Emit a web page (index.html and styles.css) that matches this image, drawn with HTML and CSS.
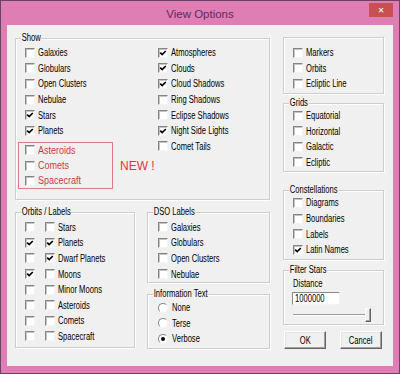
FILE: index.html
```html
<!DOCTYPE html>
<html lang="en">

<head>
    <meta charset="UTF-8">
    <meta name="viewport" content="width=device-width, initial-scale=1.0">
    <title>View Options</title>
    <link rel="stylesheet" href="styles.css">
</head>

<body>
    <div class="janela">
        <!-- Barra de título -->
        <div class="barra-titulo">
            <span></span>
            <span class="titulo">View Options</span>
            <span class="fechar">✕</span>
        </div>

        <div class="cliente">
            <!-- Coluna esquerda -->
            <div class="coluna-esq">
                <div class="grupo grupo-show">
                    <span class="rotulo">Show</span>
                    <div class="show-cols">
                        <div>
                            <div class="item"><span class="chk"></span><span class="t">Galaxies</span></div>
                            <div class="item"><span class="chk"></span><span class="t">Globulars</span></div>
                            <div class="item"><span class="chk"></span><span class="t">Open Clusters</span></div>
                            <div class="item"><span class="chk"></span><span class="t">Nebulae</span></div>
                            <div class="item"><span class="chk on"><svg viewBox="0 0 8 8"><polyline points="1.2,3.6 3.2,5.6 6.8,2"/></svg></span><span class="t">Stars</span></div>
                            <div class="item"><span class="chk on"><svg viewBox="0 0 8 8"><polyline points="1.2,3.6 3.2,5.6 6.8,2"/></svg></span><span class="t">Planets</span></div>
                            <div class="novo-linha">
                                <div class="caixa-vermelha">
                                    <div class="item"><span class="chk"></span><span class="t">Asteroids</span></div>
                                    <div class="item"><span class="chk"></span><span class="t">Comets</span></div>
                                    <div class="item"><span class="chk"></span><span class="t">Spacecraft</span></div>
                                </div>
                                <span class="novo">NEW !</span>
                            </div>
                        </div>
                        <div>
                            <div class="item"><span class="chk on"><svg viewBox="0 0 8 8"><polyline points="1.2,3.6 3.2,5.6 6.8,2"/></svg></span><span class="t">Atmospheres</span></div>
                            <div class="item"><span class="chk on"><svg viewBox="0 0 8 8"><polyline points="1.2,3.6 3.2,5.6 6.8,2"/></svg></span><span class="t">Clouds</span></div>
                            <div class="item"><span class="chk on"><svg viewBox="0 0 8 8"><polyline points="1.2,3.6 3.2,5.6 6.8,2"/></svg></span><span class="t">Cloud Shadows</span></div>
                            <div class="item"><span class="chk"></span><span class="t">Ring Shadows</span></div>
                            <div class="item"><span class="chk"></span><span class="t">Eclipse Shadows</span></div>
                            <div class="item"><span class="chk on"><svg viewBox="0 0 8 8"><polyline points="1.2,3.6 3.2,5.6 6.8,2"/></svg></span><span class="t">Night Side Lights</span></div>
                            <div class="item"><span class="chk"></span><span class="t">Comet Tails</span></div>
                        </div>
                    </div>
                </div>

                <div class="linha-baixo">
                    <div class="grupo grupo-orbits">
                        <span class="rotulo">Orbits / Labels</span>
                        <div class="item"><span class="chk"></span><span class="chk"></span><span class="t">Stars</span></div>
                        <div class="item"><span class="chk on"><svg viewBox="0 0 8 8"><polyline points="1.2,3.6 3.2,5.6 6.8,2"/></svg></span><span class="chk on"><svg viewBox="0 0 8 8"><polyline points="1.2,3.6 3.2,5.6 6.8,2"/></svg></span><span class="t">Planets</span></div>
                        <div class="item"><span class="chk"></span><span class="chk on"><svg viewBox="0 0 8 8"><polyline points="1.2,3.6 3.2,5.6 6.8,2"/></svg></span><span class="t">Dwarf Planets</span></div>
                        <div class="item"><span class="chk on"><svg viewBox="0 0 8 8"><polyline points="1.2,3.6 3.2,5.6 6.8,2"/></svg></span><span class="chk"></span><span class="t">Moons</span></div>
                        <div class="item"><span class="chk"></span><span class="chk"></span><span class="t">Minor Moons</span></div>
                        <div class="item"><span class="chk"></span><span class="chk"></span><span class="t">Asteroids</span></div>
                        <div class="item"><span class="chk"></span><span class="chk"></span><span class="t">Comets</span></div>
                        <div class="item"><span class="chk"></span><span class="chk"></span><span class="t">Spacecraft</span></div>
                    </div>

                    <div class="coluna-dso">
                        <div class="grupo grupo-dso">
                            <span class="rotulo">DSO Labels</span>
                            <div class="item"><span class="chk"></span><span class="t">Galaxies</span></div>
                            <div class="item"><span class="chk"></span><span class="t">Globulars</span></div>
                            <div class="item"><span class="chk"></span><span class="t">Open Clusters</span></div>
                            <div class="item"><span class="chk"></span><span class="t">Nebulae</span></div>
                        </div>
                        <div class="grupo grupo-info">
                            <span class="rotulo">Information Text</span>
                            <div class="item"><span class="radio"></span><span class="t">None</span></div>
                            <div class="item"><span class="radio"></span><span class="t">Terse</span></div>
                            <div class="item"><span class="radio on"></span><span class="t">Verbose</span></div>
                        </div>
                    </div>
                </div>
            </div>

            <!-- Coluna direita -->
            <div class="coluna-dir">
                <div class="grupo grupo-topo">
                    <div class="item"><span class="chk"></span><span class="t">Markers</span></div>
                    <div class="item"><span class="chk"></span><span class="t">Orbits</span></div>
                    <div class="item"><span class="chk"></span><span class="t">Ecliptic Line</span></div>
                </div>

                <div class="grupo grupo-grids">
                    <span class="rotulo">Grids</span>
                    <div class="item"><span class="chk"></span><span class="t">Equatorial</span></div>
                    <div class="item"><span class="chk"></span><span class="t">Horizontal</span></div>
                    <div class="item"><span class="chk"></span><span class="t">Galactic</span></div>
                    <div class="item"><span class="chk"></span><span class="t">Ecliptic</span></div>
                </div>

                <div class="grupo grupo-const">
                    <span class="rotulo">Constellations</span>
                    <div class="item"><span class="chk"></span><span class="t">Diagrams</span></div>
                    <div class="item"><span class="chk"></span><span class="t">Boundaries</span></div>
                    <div class="item"><span class="chk"></span><span class="t">Labels</span></div>
                    <div class="item"><span class="chk on"><svg viewBox="0 0 8 8"><polyline points="1.2,3.6 3.2,5.6 6.8,2"/></svg></span><span class="t">Latin Names</span></div>
                </div>

                <div class="grupo grupo-filtro">
                    <span class="rotulo">Filter Stars</span>
                    <div class="item"><span class="t">Distance</span></div>
                    <div class="campo"><span class="t">1000000</span></div>
                    <div class="slider">
                        <span class="trilho"></span>
                        <span class="cursor"></span>
                    </div>
                </div>

                <div class="botoes">
                    <button class="botao"><span class="t">OK</span></button>
                    <button class="botao"><span class="t">Cancel</span></button>
                </div>
            </div>
        </div>
    </div>
</body>

</html>
```

FILE: styles.css
```css
/* Configuração geral */
body {
    margin: 0;
    background: #ffffff;
    font-family: "Liberation Sans", Arial, sans-serif;
    font-size: 10px;
    color: #000;
}

/* Fonte estreita do diálogo */
.t {
    display: inline-block;
    transform: scaleX(0.76);
    transform-origin: left center;
}

.janela {
    width: 400px;
    height: 374px;
    box-sizing: border-box;
    border: 1px solid #6e4361;
    background: #df7db5;
    padding: 0 6px 7px;
    display: flex;
    flex-direction: column;
}

/* Barra de título */
.barra-titulo {
    height: 24px;
    flex: none;
    display: grid;
    grid-template-columns: 1fr auto 1fr;
    align-items: center;
}

.titulo {
    font-size: 11.5px;
    color: #652957;
    padding-top: 1px;
}

.fechar {
    justify-self: end;
    align-self: start;
    margin-top: 2px;
    width: 24px;
    height: 14px;
    background: #c8504f;
    color: #fff;
    font-family: "DejaVu Sans", sans-serif;
    font-size: 8px;
    display: flex;
    align-items: center;
    justify-content: center;
}

/* Área do diálogo */
.cliente {
    flex: 1;
    background: #f0f0f0;
    display: grid;
    grid-template-columns: 255px 101px;
    column-gap: 13px;
    padding: 12px 0 0 8px;
    align-items: start;
}

.coluna-esq {
    margin-top: 1px;
}

.grupo {
    position: relative;
    border: 1px solid #cdcdcd;
    box-shadow: inset 1px 1px 0 #fff, 1px 1px 0 #fff;
}

.rotulo {
    position: absolute;
    top: -7px;
    left: 5px;
    padding: 0 1px;
    line-height: 12px;
    background: #f0f0f0;
    transform: scaleX(0.76);
    transform-origin: left center;
}

.item {
    height: 15.6px;
    display: flex;
    align-items: center;
    white-space: nowrap;
}

/* Caixas de seleção */
.chk {
    width: 10px;
    height: 10px;
    box-sizing: border-box;
    flex: none;
    margin-right: 3px;
    background: #fff;
    border: 1px solid;
    border-color: #858585 #f4f4f4 #f4f4f4 #858585;
    box-shadow: inset 1px 1px 0 #c4c4c4;
    display: flex;
}

.chk svg {
    width: 8px;
    height: 8px;
}

.chk polyline {
    fill: none;
    stroke: #000;
    stroke-width: 1.7;
}

.radio {
    width: 10px;
    height: 10px;
    box-sizing: border-box;
    flex: none;
    margin-right: 4px;
    border-radius: 50%;
    background: #fff;
    border: 1px solid;
    border-color: #858585 #f4f4f4 #f4f4f4 #858585;
    display: flex;
    align-items: center;
    justify-content: center;
}

.radio.on::after {
    content: "";
    width: 4px;
    height: 4px;
    border-radius: 50%;
    background: #000;
}

/* Grupo Show */
.grupo-show {
    padding: 6px 0 10px 9px;
}

.show-cols {
    display: grid;
    grid-template-columns: 133px auto;
}

.novo-linha {
    display: flex;
    align-items: center;
    gap: 7px;
    margin-top: 3px;
}

.caixa-vermelha {
    width: 95px;
    box-sizing: border-box;
    margin-left: -7px;
    padding-left: 6px;
    border: 1px solid #e07b7f;
    color: #d2373f;
}

.caixa-vermelha .item {
    height: 15.3px;
}

.caixa-vermelha .t {
    transform: scaleX(0.9);
}

.novo {
    font-size: 12px;
    color: #e0363a;
}

/* Linha de baixo */
.linha-baixo {
    display: grid;
    grid-template-columns: 120px 123px;
    column-gap: 12px;
    margin-top: 12px;
    align-items: start;
}

.grupo-orbits {
    padding: 6px 0 3px 9px;
}

.grupo-orbits .chk:first-child {
    margin-right: 10px;
}

.coluna-dso {
    display: flex;
    flex-direction: column;
    gap: 11px;
}

.grupo-dso {
    padding: 6px 0 0 10px;
}

.grupo-info {
    padding: 5px 0 1px 10px;
}

/* Coluna direita */
.grupo-topo {
    padding: 7px 0 1px 9px;
}

.grupo-grids {
    margin-top: 9px;
    padding: 4px 0 1px 9px;
}

.grupo-const {
    margin-top: 18px;
    padding: 4px 0 1px 9px;
}

.grupo-filtro {
    margin-top: 10px;
    padding: 5px 0 2px 9px;
}

.campo {
    width: 48px;
    height: 13px;
    box-sizing: border-box;
    margin: 1px 0 0 -1px;
    padding-left: 2px;
    background: #fff;
    border: 1px solid;
    border-color: #8a8a8a #f4f4f4 #f4f4f4 #8a8a8a;
    line-height: 11px;
}

.slider {
    width: 78px;
    height: 14px;
    margin-top: 3px;
    display: flex;
    align-items: center;
}

.trilho {
    flex: 1;
    height: 2px;
    box-sizing: border-box;
    border-top: 1px solid #9a9a9a;
    border-bottom: 1px solid #fff;
}

.cursor {
    width: 6px;
    height: 14px;
    box-sizing: border-box;
    margin-left: -5px;
    background: #f0f0f0;
    border: 1px solid;
    border-color: #fff #646464 #646464 #fff;
    box-shadow: inset -1px -1px 0 #a0a0a0;
}

/* Botões */
.botoes {
    display: flex;
    gap: 14px;
    margin-top: 6px;
    padding-left: 1px;
}

.botao {
    width: 42px;
    height: 18px;
    padding: 0;
    font-family: inherit;
    font-size: 10px;
    color: #000;
    background: #f0f0f0;
    border: 1px solid;
    border-color: #fff #646464 #646464 #fff;
    box-shadow: inset -1px -1px 0 #a0a0a0, inset 1px 1px 0 #e3e3e3;
}

.botao .t {
    transform-origin: center;
}
```
